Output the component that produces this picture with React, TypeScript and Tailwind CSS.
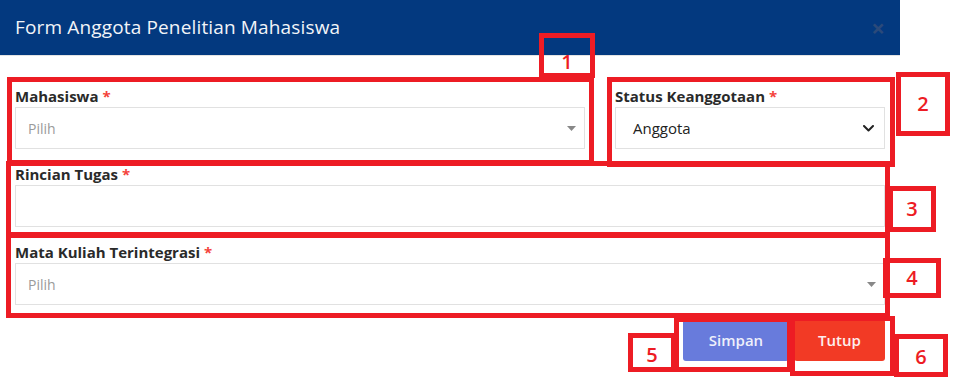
import React from "react";

const font = { fontFamily: '"Open Sans", "Noto Sans", sans-serif' };

function Ann({ cls, digit, dcls = "" }: { cls: string; digit?: string; dcls?: string }) {
  return (
    <div className={`absolute border-[5px] border-[#ed1c24] flex items-center justify-center ${cls}`}>
      {digit && (
        <span className={`text-[20px] leading-none font-semibold text-[#ed1c24] ${dcls}`}>{digit}</span>
      )}
    </div>
  );
}

function Label({ text }: { text: string }) {
  return (
    <div className="h-[20px] leading-[20px] mb-[1px] text-[15px] font-bold text-[#2a2a2a]">
      {text} <span className="text-[#f4433b]">*</span>
    </div>
  );
}

function Select2({ className = "" }: { className?: string }) {
  return (
    <div className={`h-[42px] border border-[#e1e1e1] flex items-center justify-between pl-[12px] pr-[8px] ${className}`}>
      <span className="text-[14px] text-[#9a9a9a]">Pilih</span>
      <svg width="9" height="5" viewBox="0 0 9 5">
        <path d="M0 0 L9 0 L4.5 5 Z" fill="#888" />
      </svg>
    </div>
  );
}

export default function App() {
  return (
    <div className="relative w-[959px] h-[386px] bg-white overflow-hidden" style={font}>
      <div className="w-[900px]">
        <div className="h-[56px] bg-[#03397f] flex items-center justify-between pl-[15px] pr-[15px] border-b border-[#e3e3e3]">
          <span className="text-[19px] text-[#f2f4f8] tracking-[0.15px]">Form Anggota Penelitian Mahasiswa</span>
          <span className="text-[24px] font-bold leading-none text-[#2b4a7a]">×</span>
        </div>
        <div className="px-[15px] pt-[30px]">
          <div className="flex gap-[30px]">
            <div className="w-[570px]">
              <Label text="Mahasiswa" />
              <Select2 />
            </div>
            <div className="w-[270px]">
              <Label text="Status Keanggotaan" />
              <div className="h-[42px] border border-[#e1e1e1] flex items-center justify-between pl-[17px] pr-[10px]">
                <span className="text-[15px] text-[#222]">Anggota</span>
                <svg width="11" height="7" viewBox="0 0 11 7">
                  <path d="M1 1 L5.5 5.5 L10 1" stroke="#222" strokeWidth="2" fill="none" strokeLinecap="round" strokeLinejoin="round" />
                </svg>
              </div>
            </div>
          </div>
          <div className="mt-[15px]">
            <Label text="Rincian Tugas" />
            <div className="h-[42px] border border-[#e1e1e1]" />
          </div>
          <div className="mt-[15px]">
            <Label text="Mata Kuliah Terintegrasi" />
            <Select2 />
          </div>
          <div className="mt-[14px] flex justify-end gap-[5px]">
            <div className="w-[106px] h-[42px] rounded-[3px] bg-[#687bdc] flex items-center justify-center text-[15px] font-semibold text-[#eef0fb]">
              Simpan
            </div>
            <div className="w-[91px] h-[42px] rounded-[3px] bg-[#f23a25] flex items-center justify-center text-[15px] font-semibold text-[#fdeeee]">
              Tutup
            </div>
          </div>
        </div>
      </div>

      <Ann cls="left-[7px] top-[77px] w-[587px] h-[88px]" />
      <Ann cls="left-[539px] top-[33px] w-[56px] h-[45px]" digit="1" dcls="mt-[12px]" />
      <Ann cls="left-[607px] top-[77px] w-[288px] h-[90px]" />
      <Ann cls="left-[896px] top-[72px] w-[54px] h-[64px]" digit="2" />
      <Ann cls="left-[6px] top-[161px] w-[884px] h-[76px]" />
      <Ann cls="left-[888px] top-[186px] w-[48px] h-[46px]" digit="3" />
      <Ann cls="left-[6px] top-[233px] w-[884px] h-[85px]" />
      <Ann cls="left-[883px] top-[258px] w-[58px] h-[40px]" digit="4" />
      <Ann cls="left-[674px] top-[317px] w-[118px] h-[55px]" />
      <Ann cls="left-[790px] top-[316px] w-[105px] h-[60px]" />
      <Ann cls="left-[628px] top-[333px] w-[48px] h-[39px]" digit="5" dcls="mt-[4px]" />
      <Ann cls="left-[894px] top-[334px] w-[54px] h-[43px]" digit="6" dcls="mt-[3px]" />
    </div>
  );
}
